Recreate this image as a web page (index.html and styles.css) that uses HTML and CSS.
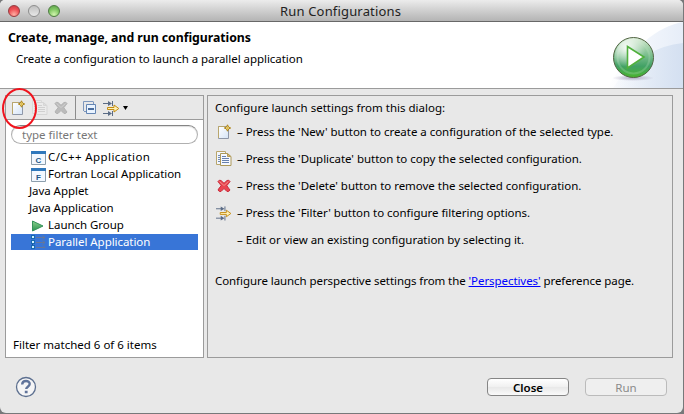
FILE: index.html
```html
<!DOCTYPE html>
<html lang="en">
<head>
<meta charset="utf-8">
<title>Run Configurations</title>
<link rel="stylesheet" href="styles.css">
</head>
<body>
<svg class="defs" width="0" height="0" aria-hidden="true">
  <defs>
    <linearGradient id="paper" x1="0" y1="0" x2="1" y2="1"><stop offset="0" stop-color="#fff"/><stop offset="1" stop-color="#d5e4f7"/></linearGradient>
    <linearGradient id="leaf" x1="0" y1="0" x2="0" y2="1"><stop offset="0" stop-color="#8bd08b"/><stop offset="1" stop-color="#2a9350"/></linearGradient>
    <linearGradient id="orb" x1="0" y1="0" x2="0" y2="1"><stop offset="0" stop-color="#d6ead2"/><stop offset=".4" stop-color="#83c293"/><stop offset=".72" stop-color="#41a165"/><stop offset="1" stop-color="#49b52c"/></linearGradient>
    <radialGradient id="shine" cx=".32" cy=".25" r=".5"><stop offset="0" stop-color="#fff" stop-opacity=".9"/><stop offset="1" stop-color="#fff" stop-opacity="0"/></radialGradient>
    <radialGradient id="shade"><stop offset="0" stop-color="#a59bb8" stop-opacity=".8"/><stop offset="1" stop-color="#a59bb8" stop-opacity="0"/></radialGradient>
    <linearGradient id="swoosh" x1="0" y1="0" x2="1" y2="0"><stop offset="0" stop-color="#fff"/><stop offset="1" stop-color="#e6edf8"/></linearGradient>
    <linearGradient id="swoosh2" x1="0" y1="0" x2="1" y2="0"><stop offset="0" stop-color="#dce6f4" stop-opacity=".1"/><stop offset="1" stop-color="#d4e0f1"/></linearGradient>
    <symbol id="new" viewBox="0 0 16 16">
      <path d="M2.500 2.500h8l2 2v10h-10z" fill="url(#paper)" stroke="#8e97a8"/>
      <path d="M2.500 14V2.500H9" fill="none" stroke="#b9a66c"/>
      <path d="M11.500 .8l1 2.200 2.200 1-2.200 1-1 2.200-1-2.200-2.200-1 2.200-1z" fill="#fff3b0" stroke="#ad8217"/>
      <path d="M11.500 2.500v3M10 4h3" stroke="#d5a82d" stroke-width=".6"/>
    </symbol>
    <symbol id="copy" viewBox="0 0 16 16">
      <path d="M.5 .5h9v13h-9z" fill="#f3f6fc" stroke="#b9a66c"/>
      <path d="M2 4.500h3M2 6.500h3M2 8.500h3M2 10.500h3" stroke="#718bb4"/>
      <path d="M4.500 2.500h7l3.500 3v9H4.500z" fill="#f5f8ff" stroke="#ac9858"/>
      <path d="M11.500 2.500v3h3z" fill="#d8bd76" stroke="#b49a55"/>
      <path d="M6 5.500h4M6 7.500h7M6 9.500h7M6 11.500h7" stroke="#6680ad"/>
    </symbol>
    <symbol id="delete" viewBox="0 0 16 16">
      <path d="M2 3.500Q3 1.500 5 2.500L8 5.300 11 2.500Q13 1.500 14 3.500 13 5 10.800 7.700 12.500 10 14 12 13 14 11 13.500L8 10.500 5 13.500Q3 14 2 12 3 10 5.200 7.700 3 5 2 3.500z" fill="#ea4550" stroke="#c92c3c"/>
      <path d="M3.500 3.500l4.500 4 4.500-4" fill="none" stroke="#f28a86"/>
    </symbol>
    <symbol id="filter" viewBox="0 0 17 16">
      <path d="M0 3.500h7M0 13.500h7M9.500 1v5M9.500 11v5" stroke="#5a6b85"/>
      <path d="M5 1l4 2.500L5 6zM5 11l4 2.500L5 16z" fill="#5a6b85"/>
      <path d="M4.500 7.500h6.500V5L15.800 8.500 11 12V9.500H4.500z" fill="#fff0b4" stroke="#c48d12"/>
    </symbol>
  </defs>
</svg>
<div class="window">
  <header class="titlebar">
    <div class="lights"><i class="red"></i><i class="gray"></i><i class="green"></i></div>
    <h1 class="caption">Run Configurations</h1>
  </header>
  <section class="banner">
    <div class="banner-text">
      <h2>Create, manage, and run configurations</h2>
      <p>Create a configuration to launch a parallel application</p>
    </div>
    <svg class="art" width="84" height="66" viewBox="0 0 84 66">
      <path d="M8 66C34 24 58 5 84 0v66z" fill="url(#swoosh)"/>
      <path d="M14 66C34 36 58 24 84 21v45z" fill="url(#swoosh2)"/>
      <ellipse cx="34" cy="56" rx="21" ry="3" fill="url(#shade)"/>
      <circle cx="34.500" cy="35.500" r="20" fill="url(#orb)" stroke="#526443"/>
      <circle cx="34.500" cy="35.500" r="16" fill="none" stroke="#c0e3c4" stroke-width="2" opacity=".25"/>
      <circle cx="34.500" cy="35.500" r="19" fill="url(#shine)"/>
      <path d="M28.500 24.500l16.500 10.500-16.500 11z" fill="#fff" stroke="#50b03c" stroke-width="1.600"/>
    </svg>
  </section>
  <main class="panes">
    <section class="pane sidebar">
      <div class="toolbar">
        <svg class="t-new" width="16" height="16"><use href="#new"/></svg>
        <svg class="t-copy off" width="16" height="16"><use href="#copy"/></svg>
        <svg class="t-del off" width="16" height="16"><use href="#delete"/></svg>
        <span class="divider"></span>
        <svg class="t-collapse" width="14" height="14" viewBox="0 0 14 14"><path d="M.5 10V.5h10" fill="none" stroke="#7d97bd"/><path d="M3.500 3.500h9v9h-9z" fill="#e9f3ff" stroke="#6485b3"/><path d="M1 10.500h2M10.500 1v2" stroke="#7d97bd"/><path d="M5 8h6" stroke="#123f7e" stroke-width="1.500"/></svg>
        <svg class="t-filter" width="17" height="16"><use href="#filter"/></svg>
        <svg class="t-caret" width="5" height="4"><path d="M0 0h5L2.500 4z" fill="#000"/></svg>
        <span class="ring"></span>
      </div>
      <input class="search" type="text" placeholder="type filter text">
      <ul class="tree">
        <li class="sub"><svg width="15" height="14" viewBox="0 0 15 14"><path d="M.5.500h14v13H.5z" fill="#f2f8ff" stroke="#8c9eac"/><path d="M0 0h15v3H0z" fill="#2f78bc"/><text x="7.300" y="11.500">C</text></svg><span class="wide">C/C++ Application</span></li>
        <li class="sub"><svg width="15" height="14" viewBox="0 0 15 14"><path d="M.5.500h14v13H.5z" fill="#f2f8ff" stroke="#8c9eac"/><path d="M0 0h15v3H0z" fill="#2f78bc"/><text x="7.300" y="11.500">F</text></svg><span>Fortran Local Application</span></li>
        <li><span>Java Applet</span></li>
        <li><span>Java Application</span></li>
        <li class="sub"><svg width="15" height="14" viewBox="0 0 15 14"><path d="M1.500 2v10L12 7z" fill="url(#leaf)" stroke="#35925a"/></svg><span>Launch Group</span></li>
        <li class="sub selected"><svg width="15" height="14" viewBox="0 0 15 14"><path d="M1.500 3v9" stroke="#275491" stroke-dasharray="1 1"/><path d="M0 0h4v4H0zM0 5h4v4H0zM0 10h4v4H0z" fill="#1769b1"/><path d="M1 1h2v2H1zM1 6h2v2H1zM1 11h2v2H1z" fill="#cdefff"/><path d="M5 2.500h9M11.500 .5l2.500 2-2.500 2M5 7.500h9M11.500 5.500l2.500 2-2.500 2M5 12.500h9M12 10.500l2 2" fill="none" stroke="#65779a"/></svg><span>Parallel Application</span></li>
      </ul>
      <p class="status"><span>Filter matched 6 of 6 items</span></p>
    </section>
    <section class="pane help">
      <p class="intro"><span>Configure launch settings from this dialog:</span></p>
      <ul class="tips">
        <li><svg width="16" height="16"><use href="#new"/></svg><span>– Press the 'New' button to create a configuration of the selected type.</span></li>
        <li><svg width="16" height="16"><use href="#copy"/></svg><span>– Press the 'Duplicate' button to copy the selected configuration.</span></li>
        <li><svg width="16" height="16"><use href="#delete"/></svg><span>– Press the 'Delete' button to remove the selected configuration.</span></li>
        <li><svg width="16" height="16"><use href="#filter"/></svg><span>– Press the 'Filter' button to configure filtering options.</span></li>
        <li><i class="blank"></i><span>– Edit or view an existing configuration by selecting it.</span></li>
      </ul>
      <p class="perspective"><span>Configure launch perspective settings from the <a href="#">'Perspectives'</a> preference page.</span></p>
    </section>
  </main>
  <footer class="actions">
    <svg class="question" width="22" height="22" viewBox="0 0 22 22"><circle cx="11" cy="11" r="9.500" fill="#f5f5f6" stroke="#5d7090" stroke-width="1.300"/><path d="M7.200 8.500C7.200 3.800 14.800 4 14.700 8c0 2.500-3.500 2.800-3.500 5" fill="none" stroke="#60739a" stroke-width="2.400"/><path d="M9.800 14.700h2.800v2.500H9.800z" fill="#60739a"/></svg>
    <button class="close">Close</button>
    <button class="run" disabled>Run</button>
  </footer>
</div>
</body>
</html>
```
FILE: styles.css
```css
* { box-sizing: border-box; margin: 0; padding: 0; }
html { background: #77787a; }
body { width: 684px; height: 414px; overflow: hidden; font: 11.5px/17px "Noto Sans", "Open Sans", sans-serif; color: #000; }
.defs { position: absolute; }
ul { list-style: none; }
span { white-space: nowrap; }
svg { flex: none; }

.window { width: 683px; height: 413px; display: flex; flex-direction: column; background: #e8e8e8; border-radius: 5px 5px 6px 6px; overflow: hidden; }

.titlebar { height: 22px; flex: none; display: flex; align-items: center; background: linear-gradient(#ececec, #d2d2d2 45%, #b4b4b4); border-bottom: 1px solid #686868; padding-left: 8px; }
.lights { display: flex; gap: 8px; width: 272px; }
.lights i { width: 12px; height: 12px; border-radius: 50%; border: 1px solid #7c7c7c; }
.lights .red { background: radial-gradient(circle at 50% 85%, #ffb0a4, #ee5055 55%, #c93940); border-color: #963c40; }
.lights .gray { background: linear-gradient(#c0c0c0, #e8e8e8); border-color: #8d8d8d; }
.lights .green { background: radial-gradient(circle at 50% 85%, #d1f5ae, #80c763 55%, #5b9d49); border-color: #4d7c42; }
.caption { font-size: 13px; font-weight: 400; line-height: 20px; letter-spacing: .17px; color: #222; white-space: nowrap; }

.banner { height: 67px; flex: none; display: flex; justify-content: space-between; background: #fff; border-bottom: 1px solid #9b9b9b; }
.banner-text { padding: 7px 0 0 8px; white-space: nowrap; }
.banner h2 { font-size: 12.3px; line-height: 17px; letter-spacing: -.04px; }
.banner p { padding: 4px 0 0 8px; letter-spacing: -.04px; }

.panes { display: flex; gap: 3px; height: 263px; margin: 6px 10px 0 5px; flex: none; }
.pane { border: 1px solid #9b9b9b; }
.sidebar { width: 199px; background: #fff; display: flex; flex-direction: column; }
.help { flex: 1; padding: 3px 0 0 7px; }

.toolbar { position: relative; height: 24px; flex: none; background: #e8e8e8; border-bottom: 1px solid #9b9b9b; display: flex; align-items: center; padding-left: 4px; }
.off { filter: grayscale(1); opacity: .22; }
.t-copy { margin-left: 6px; }
.t-del { margin-left: 5px; opacity: .35; }
.divider { width: 1px; height: 23px; background: #8c8c8c; margin-left: 6px; }
.t-collapse { margin-left: 7px; }
.t-filter { margin-left: 6px; }
.t-caret { margin-left: 3px; }
.ring { position: absolute; left: -4px; top: -8px; width: 35px; height: 41px; border: 2px solid #f0141e; border-radius: 50%; }

.search { width: 187px; height: 19px; flex: none; margin: 5px 0 0 5px; border: 1px solid #b0b0b0; border-top-color: #858585; border-radius: 10px; padding: 0 10px; font: 11.5px/17px "Noto Sans", sans-serif; outline: 0; box-shadow: inset 0 1px 1px #ddd; }
.search::placeholder { color: #777; opacity: 1; }

.tree { margin: 5px 5px 0; }
.tree li { height: 17px; display: flex; align-items: center; padding-left: 18px; letter-spacing: -.05px; }
.tree span { padding-bottom: 2px; }
.tree .sub { padding-left: 20px; gap: 2px; }
.tree .sub svg { margin-left: 0; }
.tree .wide { letter-spacing: .4px; }
.tree .selected { background: #3875d7; color: #fff; height: 16px; }
.tree text { font: bold 8px "Liberation Sans", sans-serif; fill: #235687; text-anchor: middle; }
.status { margin: auto 0 4px 7px; }

.tips { margin-top: 2px; }
.tips li { height: 27px; display: flex; align-items: center; gap: 5px; padding-left: 1px; letter-spacing: -.03px; }
.tips .blank { width: 16px; }
.perspective { margin-top: 19px; letter-spacing: -.07px; }
a { color: #00f; }

.actions { display: flex; align-items: center; padding: 3px 16px 0 15px; height: 55px; }
.question { margin-right: auto; }
button { width: 82px; height: 18px; font: 11.5px/15px "Noto Sans", sans-serif; border: 1px solid #858585; border-radius: 4px; background: linear-gradient(#fff, #f0f0f0 50%, #e8e8e8 51%, #fafafa); }
.close { font-weight: 600; color: #000; margin-right: 16px; }
.run { color: #8a8a8a; border-color: #bbb; background: #efefef; }
```
